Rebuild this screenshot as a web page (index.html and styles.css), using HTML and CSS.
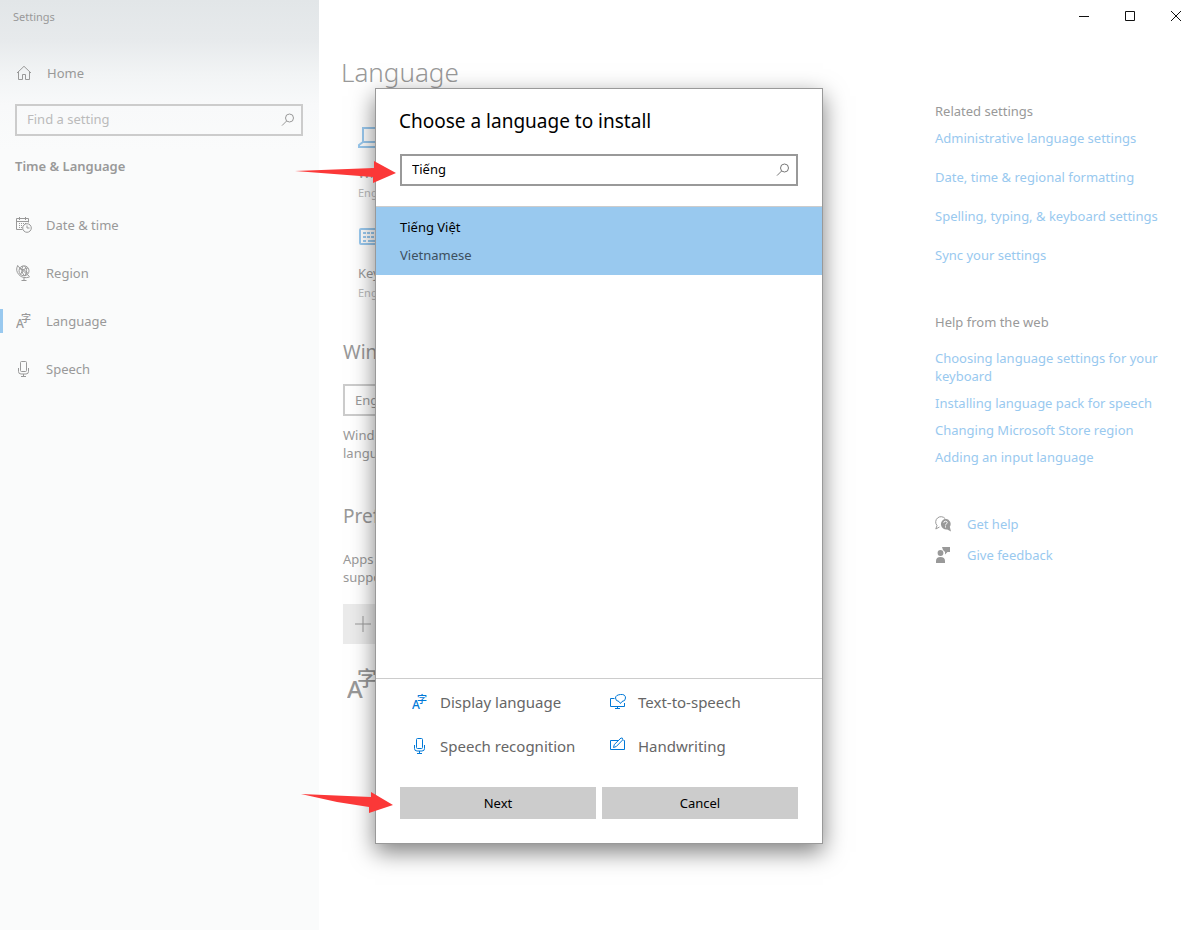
FILE: index.html
```html
<!DOCTYPE html>
<html lang="en">
<head>
    <meta charset="UTF-8">
    <meta name="viewport" content="width=device-width, initial-scale=1.0">
    <title>Settings</title>
    <link rel="stylesheet" href="styles.css">
</head>
<body>
    <!-- shared icons -->
    <svg class="sprite" aria-hidden="true">
        <symbol id="i-search" viewBox="0 0 14 14">
            <circle cx="8.5" cy="5" r="4"/>
            <path d="M5.6 8 L1 12.6"/>
        </symbol>
        <symbol id="i-lang" viewBox="0 0 16 16">
            <text class="glyph-a" x="0" y="15">A</text>
            <text class="glyph-zi" x="5" y="9">字</text>
        </symbol>
        <symbol id="i-mic" viewBox="0 0 16 18">
            <rect x="4.5" y="1.5" width="6" height="10" rx="1"/>
            <path d="M2.500 8v3.500q0 2.500 2.500 2.500h5q2.500 0 2.500-2.500V8M7.500 14v2.500M5 16.500h5"/>
        </symbol>
    </svg>

    <div class="window">
        <!-- left navigation -->
        <nav class="sidebar">
            <div class="app-title">Settings</div>
            <a class="nav-item home" href="#">
                <svg class="icon" viewBox="0 0 16 16"><path d="M1 8 8 1.300 15 8M2.500 7v7.500h4v-5h3v5h4V7"/></svg>
                Home
            </a>
            <div class="search">
                <input type="text" placeholder="Find a setting" aria-label="Find a setting">
                <svg class="search-icon"><use href="#i-search"/></svg>
            </div>
            <h2 class="group-title">Time &amp; Language</h2>
            <a class="nav-item" href="#">
                <svg class="icon" viewBox="0 0 16 16">
                    <path d="M6.500 12.500H.5v-11h12v4M.5 4.500h12M3.500 0v3M9.500 0v3"/>
                    <path stroke-dasharray="1 1" d="M3 6.500h7M3 8.500h4M3 10.500h3"/>
                    <circle cx="11" cy="11" r="4.300"/><path d="M11 8.500v2.500h2.500"/>
                </svg>
                Date &amp; time
            </a>
            <a class="nav-item" href="#">
                <svg class="icon" viewBox="0 0 16 16">
                    <circle cx="8" cy="5.800" r="5"/>
                    <path d="M1.800.3Q-1 5.500 3 9.800T13.500 12M1.500.8 13.500 11.500M3.500 3.800q4.500-.5 8.500 4.500M12 3q-5 0-7.500 6.500M7 1q-3 5 1.500 9.800M8.500 1q4 4 .5 9.800M8 12.500v3M5.500 15.500h5"/>
                </svg>
                Region
            </a>
            <a class="nav-item active" href="#">
                <svg class="icon"><use href="#i-lang"/></svg>
                Language
            </a>
            <a class="nav-item" href="#">
                <svg class="icon mic"><use href="#i-mic"/></svg>
                Speech
            </a>
        </nav>

        <!-- page content -->
        <main class="content">
            <h1>Language</h1>
            <div class="tile">
                <svg class="tile-icon" viewBox="0 0 34 24"><path d="M5 3h24v14H5zM5 17l-4 3v2h32v-2l-4-3"/></svg>
                <span class="tile-name">Windows display</span>
                <span class="tile-value">English (United States)</span>
            </div>
            <div class="tile">
                <svg class="tile-icon" viewBox="0 0 34 24">
                    <rect x="2" y="4" width="31" height="15" rx="1"/>
                    <path stroke-dasharray="3 1" d="M5 8h25M5 12h25"/><path d="M5 16h3M10 16h15M27 16h3"/>
                </svg>
                <span class="tile-name">Keyboard</span>
                <span class="tile-value">English (United States)</span>
            </div>

            <h2>Windows display language</h2>
            <select class="language-select" aria-label="Windows display language">
                <option>English (United States)</option>
            </select>
            <p>Windows features like Settings and File Explorer will appear in this language.</p>

            <h2>Preferred languages</h2>
            <p>Apps and websites will appear in the first language in the list that they support.</p>
            <button class="add" type="button">
                <svg viewBox="0 0 16 16"><path d="M8 0v16M0 8h16"/></svg>
                Add a language
            </button>
            <svg class="language-mark"><use href="#i-lang"/></svg>
        </main>

        <!-- related links -->
        <aside class="related">
            <h3>Related settings</h3>
            <ul class="links wide">
                <li><a href="#">Administrative language settings</a></li>
                <li><a href="#">Date, time &amp; regional formatting</a></li>
                <li><a href="#">Spelling, typing, &amp; keyboard settings</a></li>
                <li><a href="#">Sync your settings</a></li>
            </ul>
            <h3>Help from the web</h3>
            <ul class="links">
                <li><a href="#">Choosing language settings for your keyboard</a></li>
                <li><a href="#">Installing language pack for speech</a></li>
                <li><a href="#">Changing Microsoft Store region</a></li>
                <li><a href="#">Adding an input language</a></li>
            </ul>
            <a class="support" href="#">
                <svg viewBox="0 0 16 16">
                    <path class="line" d="M4.500 11 .8 13l1.200-3.500A5 5 0 1 1 10 2.500"/>
                    <path d="M10.500 2.800a5.200 5.200 0 0 1 4.300 8L16 15.500l-3.800-2A5.300 5.300 0 1 1 10.500 2.800z"/>
                    <path class="mark" d="M8.800 6.800q0-1.600 1.700-1.600t1.700 1.500q0 .8-.9 1.300t-.8 1.400M10.500 10.300v1.200"/>
                </svg>
                Get help
            </a>
            <a class="support" href="#">
                <svg viewBox="0 0 16 16">
                    <circle cx="5.500" cy="6" r="2.900"/>
                    <path d="M1 16v-2q0-4 4.500-4t4.500 4v2zM7 0h8v5h-2.500L10 7.500V5L8 3z"/>
                </svg>
                Give feedback
            </a>
        </aside>
    </div>

    <div class="window-buttons">
        <button type="button" aria-label="Minimize"><svg viewBox="0 0 12 12"><path d="M1 6.500h10"/></svg></button>
        <button type="button" aria-label="Maximize"><svg viewBox="0 0 12 12"><path d="M1.500 1.500h9v9h-9z"/></svg></button>
        <button type="button" aria-label="Close"><svg viewBox="0 0 12 12"><path d="m1 1 10 10M11 1 1 11"/></svg></button>
    </div>

    <!-- install dialog -->
    <div class="overlay">
        <section class="dialog" role="dialog" aria-labelledby="dialogTitle">
            <h2 id="dialogTitle">Choose a language to install</h2>
            <div class="search">
                <input type="text" value="Tiếng" aria-label="Search for a language">
                <svg class="search-icon"><use href="#i-search"/></svg>
            </div>
            <ul class="results">
                <li class="selected">
                    <span>Tiếng Việt</span>
                    <span class="english">Vietnamese</span>
                </li>
            </ul>
            <div class="features">
                <div class="feature"><svg class="bold"><use href="#i-lang"/></svg>Display language</div>
                <div class="feature">
                    <svg viewBox="0 0 16 18">
                        <path d="M4.500 5.500h-4v8h14V10M7.500 13.500v2M5 15.500h5"/>
                        <path d="M9 8.500Q5.500 8 5.500 5T10.500 1.500 15.500 5q0 3.200-3.500 3.500l-1.500 2z"/>
                    </svg>
                    Text-to-speech
                </div>
                <div class="feature"><svg><use href="#i-mic"/></svg>Speech recognition</div>
                <div class="feature">
                    <svg viewBox="0 0 16 18">
                        <path d="M8 3.500H.5v9h14v-9h-1"/>
                        <path d="m3.500 10.500.8-3L11 1q2-.5 1.800 1.800L6.300 9.500z"/>
                    </svg>
                    Handwriting
                </div>
            </div>
            <div class="actions">
                <button type="button">Next</button>
                <button type="button">Cancel</button>
            </div>
            <svg class="arrow arrow-search" viewBox="0 0 102 24"><path d="M0 10 79 7V0l22 12-23 10v-6z"/></svg>
            <svg class="arrow arrow-next" viewBox="0 0 94 24"><path d="M0 2 70 5V0l22 13-24 8v-6L36 10z"/></svg>
        </section>
    </div>
</body>
</html>
```
FILE: styles.css
```css
* { box-sizing: border-box; }
body {
    margin: 0;
    background: #fff;
    color: #999;
    font: 13px/18px "Segoe UI", "Noto Sans", "Open Sans", sans-serif;
}
h1, h2, h3, p, ul { margin: 0; padding: 0; font-weight: normal; }
h3 { font-size: 13px; }
ul { list-style: none; }
a { color: #99c9ef; text-decoration: none; }
button, input, select { font: inherit; color: inherit; border-radius: 0; }
svg { fill: none; stroke: currentColor; flex: none; }
.sprite { display: none; }
.glyph-a, .glyph-zi { fill: currentColor; stroke: none; }
.glyph-a { font: 500 12px "Noto Sans", sans-serif; }
.glyph-zi { font: 500 10px "Noto Sans CJK SC", sans-serif; }

.window { display: flex; min-height: 100vh; }

/* sidebar */
.sidebar {
    width: 319px;
    flex: none;
    padding-top: 8px;
    background: linear-gradient(#e2e6e8 0, #e7eaec 40px, #f2f4f5 75px, #f8f9fa 105px, #fafbfb 150px);
}
.app-title { padding-left: 13px; font-size: 11px; }
.nav-item {
    display: flex;
    align-items: center;
    gap: 14px;
    height: 48px;
    padding-left: 16px;
    color: #999;
}
.nav-item.home { margin-top: 23px; gap: 15px; }
.icon { width: 16px; height: 16px; }
.icon.mic { height: 18px; }
.nav-item.active {
    padding-left: 13px;
    border-left: 3px solid transparent;
    background: linear-gradient(#99c9ef, #99c9ef) 0 center / 3px 24px no-repeat border-box;
}

.search { display: flex; align-items: center; height: 32px; border: 2px solid #ccc; padding-right: 6px; }
.search input { flex: 1; min-width: 0; height: 28px; padding: 0 10px 2px; border: 0; outline: 0; background: none; }
.search input::placeholder { color: #bbb; opacity: 1; }
.search-icon { width: 14px; height: 14px; }
.sidebar .search { margin: 7px 16px 0 15px; }
.group-title { margin: 21px 0 26px 15px; font-size: 13px; font-weight: 600; }

/* content */
.content { flex: 1; padding: 53px 80px 0 24px; }
.content h1 { font-size: 26px; line-height: 38px; font-weight: 300; margin: 0 0 34px -2px; }
.tile { display: flex; flex-direction: column; height: 100px; padding-left: 15px; }
.tile-icon { width: 34px; height: 24px; color: #99c9ef; stroke-width: 2; margin-bottom: 15px; }
.tile-value { margin-top: 2px; color: #bbb; font-size: 11px; }
.content h2 { font-size: 19px; line-height: 28px; }
.tile + h2 { margin-top: 13px; }
.content p { max-width: 450px; }
.language-select {
    display: block;
    width: 280px;
    height: 32px;
    margin: 18px 0 10px;
    padding: 0 10px;
    border: 2px solid #ccc;
    background: #fff;
    appearance: none;
}
.content p + h2 { margin: 40px 0 20px; }
.add { display: flex; align-items: center; gap: 12px; height: 40px; width: 200px; margin-top: 18px; padding: 0 12px; border: 0; background: #ebebeb; }
.add svg { width: 16px; height: 16px; }
.language-mark { display: block; width: 32px; height: 32px; margin: 24px 0 0 4px; }

/* related links */
.related { width: 264px; flex: none; padding: 102px 30px 0 0; }
.links { display: grid; gap: 9px; margin: 18px 0 49px; }
.links.wide { gap: 21px; margin: 9px 0 49px; }
.support { display: flex; align-items: center; gap: 16px; margin-bottom: 13px; }
.support svg { width: 16px; height: 16px; color: #999; fill: currentColor; stroke: none; }
.support .line { fill: none; stroke: currentColor; }
.support .mark { fill: none; stroke: #fff; }

.window-buttons { position: absolute; top: 0; right: 0; display: flex; color: #111; }
.window-buttons button { display: grid; place-items: center; width: 46px; height: 32px; padding: 0; border: 0; background: none; }
.window-buttons svg { width: 12px; height: 12px; }

/* dialog */
.overlay { position: absolute; inset: 0; display: grid; place-items: center; padding: 2px 1px 0 0; pointer-events: none; }
.dialog {
    position: relative;
    width: 448px;
    padding: 19px 0 24px;
    border: 1px solid #999;
    background: #fff;
    color: #000;
    box-shadow: 0 8px 22px rgba(0, 0, 0, 0.5);
    pointer-events: auto;
}
.dialog h2 { margin: 0 23px 19px; font-size: 19px; line-height: 27px; }
.dialog .search { margin: 0 24px 20px; border-color: #999; }
.dialog .search-icon { color: #777; }
.results { min-height: 473px; border-top: 1px solid #ccc; border-bottom: 1px solid #ccc; }
.results li { display: grid; gap: 10px; padding: 11px 24px; background: #99c9ef; }
.results .english { color: #3d505f; }
.features { display: grid; grid-template-columns: 198px 1fr; padding: 1px 0 19px 36px; }
.feature { display: flex; align-items: center; gap: 12px; height: 44px; color: #666; font-size: 15px; }
.feature svg { width: 16px; height: 18px; color: #0078d7; }
.feature .bold { font-weight: 700; stroke-width: 1; }
.actions { display: grid; grid-template-columns: 1fr 1fr; gap: 6px; padding: 0 24px; }
.actions button { height: 32px; padding: 0; border: 0; background: #ccc; }

/* red pointers */
.arrow { position: absolute; fill: #fb3838; stroke: none; }
.arrow-search { top: 72px; left: -81px; width: 102px; height: 24px; }
.arrow-next { top: 703px; left: -75px; width: 94px; height: 24px; }
```
